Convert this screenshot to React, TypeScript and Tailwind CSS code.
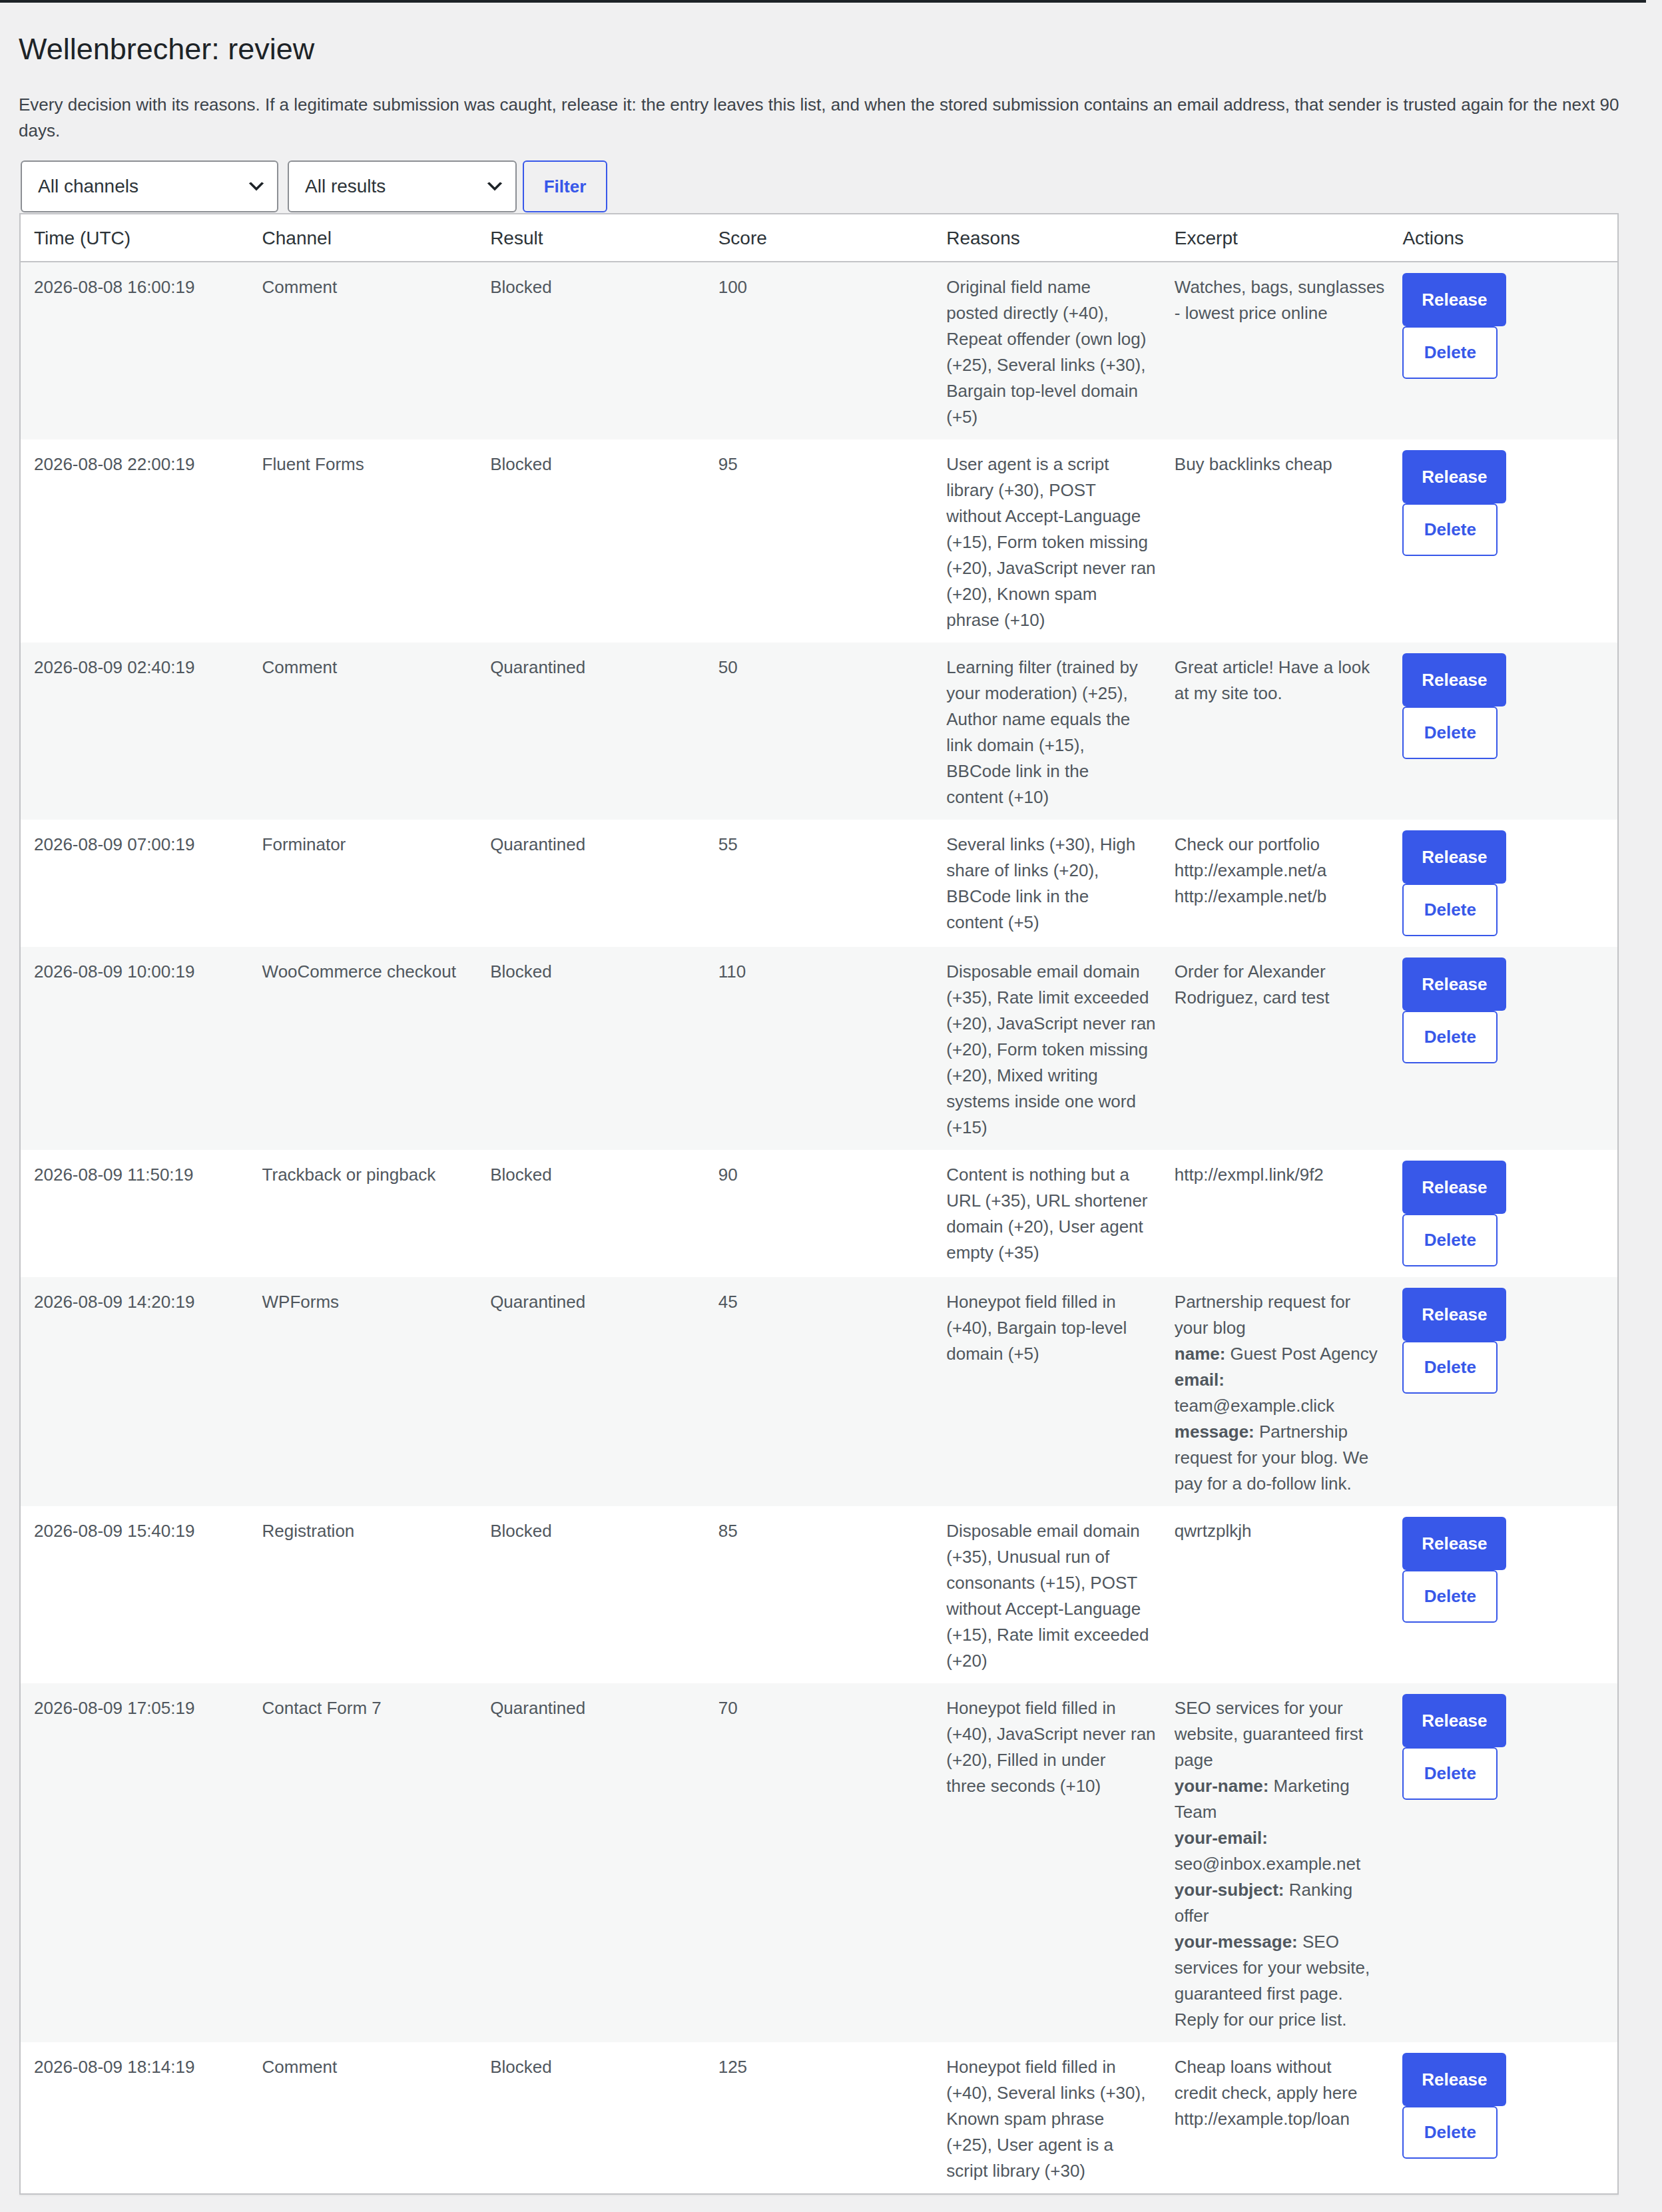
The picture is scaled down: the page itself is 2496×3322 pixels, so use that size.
type Line = string | { b: string; t?: string };

type Entry = {
  time: string;
  channel: string;
  result: string;
  score: number;
  reasons: string[];
  excerpt: Line[];
};

const entries: Entry[] = [
  {
    time: "2026-08-08 16:00:19",
    channel: "Comment",
    result: "Blocked",
    score: 100,
    reasons: [
      "Original field name",
      "posted directly (+40),",
      "Repeat offender (own log)",
      "(+25), Several links (+30),",
      "Bargain top-level domain",
      "(+5)",
    ],
    excerpt: ["Watches, bags, sunglasses", "- lowest price online"],
  },
  {
    time: "2026-08-08 22:00:19",
    channel: "Fluent Forms",
    result: "Blocked",
    score: 95,
    reasons: [
      "User agent is a script",
      "library (+30), POST",
      "without Accept-Language",
      "(+15), Form token missing",
      "(+20), JavaScript never ran",
      "(+20), Known spam",
      "phrase (+10)",
    ],
    excerpt: ["Buy backlinks cheap"],
  },
  {
    time: "2026-08-09 02:40:19",
    channel: "Comment",
    result: "Quarantined",
    score: 50,
    reasons: [
      "Learning filter (trained by",
      "your moderation) (+25),",
      "Author name equals the",
      "link domain (+15),",
      "BBCode link in the",
      "content (+10)",
    ],
    excerpt: ["Great article! Have a look", "at my site too."],
  },
  {
    time: "2026-08-09 07:00:19",
    channel: "Forminator",
    result: "Quarantined",
    score: 55,
    reasons: [
      "Several links (+30), High",
      "share of links (+20),",
      "BBCode link in the",
      "content (+5)",
    ],
    excerpt: ["Check our portfolio", "http://example.net/a", "http://example.net/b"],
  },
  {
    time: "2026-08-09 10:00:19",
    channel: "WooCommerce checkout",
    result: "Blocked",
    score: 110,
    reasons: [
      "Disposable email domain",
      "(+35), Rate limit exceeded",
      "(+20), JavaScript never ran",
      "(+20), Form token missing",
      "(+20), Mixed writing",
      "systems inside one word",
      "(+15)",
    ],
    excerpt: ["Order for Alexander", "Rodriguez, card test"],
  },
  {
    time: "2026-08-09 11:50:19",
    channel: "Trackback or pingback",
    result: "Blocked",
    score: 90,
    reasons: [
      "Content is nothing but a",
      "URL (+35), URL shortener",
      "domain (+20), User agent",
      "empty (+35)",
    ],
    excerpt: ["http://exmpl.link/9f2"],
  },
  {
    time: "2026-08-09 14:20:19",
    channel: "WPForms",
    result: "Quarantined",
    score: 45,
    reasons: ["Honeypot field filled in", "(+40), Bargain top-level", "domain (+5)"],
    excerpt: [
      "Partnership request for",
      "your blog",
      { b: "name:", t: " Guest Post Agency" },
      { b: "email:" },
      "team@example.click",
      { b: "message:", t: " Partnership" },
      "request for your blog. We",
      "pay for a do-follow link.",
    ],
  },
  {
    time: "2026-08-09 15:40:19",
    channel: "Registration",
    result: "Blocked",
    score: 85,
    reasons: [
      "Disposable email domain",
      "(+35), Unusual run of",
      "consonants (+15), POST",
      "without Accept-Language",
      "(+15), Rate limit exceeded",
      "(+20)",
    ],
    excerpt: ["qwrtzplkjh"],
  },
  {
    time: "2026-08-09 17:05:19",
    channel: "Contact Form 7",
    result: "Quarantined",
    score: 70,
    reasons: [
      "Honeypot field filled in",
      "(+40), JavaScript never ran",
      "(+20), Filled in under",
      "three seconds (+10)",
    ],
    excerpt: [
      "SEO services for your",
      "website, guaranteed first",
      "page",
      { b: "your-name:", t: " Marketing" },
      "Team",
      { b: "your-email:" },
      "seo@inbox.example.net",
      { b: "your-subject:", t: " Ranking" },
      "offer",
      { b: "your-message:", t: " SEO" },
      "services for your website,",
      "guaranteed first page.",
      "Reply for our price list.",
    ],
  },
  {
    time: "2026-08-09 18:14:19",
    channel: "Comment",
    result: "Blocked",
    score: 125,
    reasons: [
      "Honeypot field filled in",
      "(+40), Several links (+30),",
      "Known spam phrase",
      "(+25), User agent is a",
      "script library (+30)",
    ],
    excerpt: ["Cheap loans without", "credit check, apply here", "http://example.top/loan"],
  },
];

const columns = ["Time (UTC)", "Channel", "Result", "Score", "Reasons", "Excerpt", "Actions"];

function Chevron() {
  return (
    <svg viewBox="0 0 20 20" className="w-[32px] h-[32px] shrink-0 fill-[#1d2327]">
      <path d="M5 6l5 5 5-5 2 1-7 7-7-7 2-1z" />
    </svg>
  );
}

function SelectBox({ label, width }: { label: string; width: string }) {
  return (
    <div
      className={`${width} h-[78px] flex items-center justify-between pl-[24px] pr-[15px] bg-white border-2 border-[#8c8f94] rounded-[6px] text-[28px] text-[#2c3338]`}
    >
      <span>{label}</span>
      <Chevron />
    </div>
  );
}

function Lines({ lines }: { lines: Line[] }) {
  return (
    <>
      {lines.map((l, i) =>
        typeof l === "string" ? (
          <span key={i} className="block whitespace-nowrap">
            {l}
          </span>
        ) : (
          <span key={i} className="block whitespace-nowrap">
            <strong className="font-bold">{l.b}</strong>
            {l.t}
          </span>
        )
      )}
    </>
  );
}

const td = "align-top pt-[18px] pb-[14px] px-[20px] text-[26px] leading-[39px] text-[#50575e]";

export default function App() {
  return (
    <div className="min-h-screen bg-[#f0f0f1] font-['Liberation_Sans',Arial,sans-serif] pb-[26px]">
      <div className="h-[4px] bg-[#1d2327] mr-[24px]" />
      <div className="pl-[28px] pr-[65px]">
        <h1 className="mt-[40px] text-[45px] leading-[60px] font-normal text-[#1d2327]">
          Wellenbrecher: review
        </h1>
        <p className="mt-[34px] mr-[-40px] text-[26px] leading-[39px] text-[#3c434a]">
          Every decision with its reasons. If a legitimate submission was caught, release it: the entry
          leaves this list, and when the stored submission contains an email address, that sender is
          trusted again for the next 90
          <br />
          days.
        </p>
        <div className="mt-[25px] ml-[3px] flex items-center">
          <SelectBox label="All channels" width="w-[387px]" />
          <div className="w-[14px]" />
          <SelectBox label="All results" width="w-[344px]" />
          <button className="ml-[9px] w-[127px] h-[78px] border-2 border-[#3858e9] rounded-[6px] text-[26px] font-semibold text-[#3858e9] bg-transparent">
            Filter
          </button>
        </div>
        <table className="mt-[1px] ml-[1px] w-[2402px] table-fixed border-separate border-spacing-0 border-2 border-[#c3c4c7] bg-white shadow-[0_2px_2px_rgba(0,0,0,0.04)]">
          <thead>
            <tr>
              {columns.map((c) => (
                <th
                  key={c}
                  className="text-left font-normal text-[28px] leading-[38px] text-[#2c3338] pt-[17px] pb-[15px] px-[20px] border-b-2 border-[#c3c4c7]"
                >
                  {c}
                </th>
              ))}
            </tr>
          </thead>
          <tbody>
            {entries.map((e, i) => (
              <tr key={e.time} className={i % 2 === 0 ? "bg-[#f6f7f7]" : "bg-white"}>
                <td className={td}>{e.time}</td>
                <td className={td}>{e.channel}</td>
                <td className={td}>{e.result}</td>
                <td className={td}>{e.score}</td>
                <td className={td}>
                  <Lines lines={e.reasons} />
                </td>
                <td className={td}>
                  <Lines lines={e.excerpt} />
                </td>
                <td className="align-top py-[16px] px-[20px]">
                  <div className="flex flex-col items-start">
                    <button className="w-[156px] h-[80px] rounded-[6px] bg-[#3858e9] text-white text-[26px] font-semibold">
                      Release
                    </button>
                    <button className="w-[143px] h-[79px] rounded-[6px] border-2 border-[#3858e9] bg-white text-[#3858e9] text-[26px] font-semibold">
                      Delete
                    </button>
                  </div>
                </td>
              </tr>
            ))}
          </tbody>
        </table>
      </div>
    </div>
  );
}
